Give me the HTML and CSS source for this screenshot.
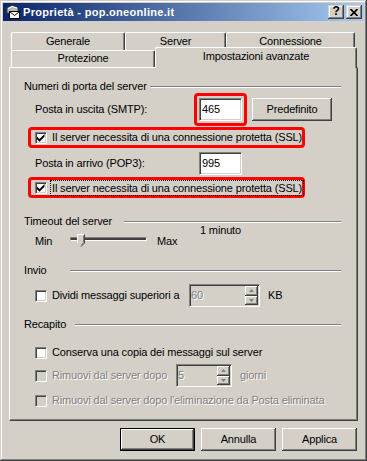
FILE: index.html
```html
<!DOCTYPE html>
<html>
  <head>
    <meta charset="utf-8">
    <title>Proprietà - pop.oneonline.it</title>
    <link rel="stylesheet" href="styles.css">
  </head>
  <body>

    <div class="window">
      <div class="titlebar">
        <svg class="appicon" width="16" height="16" viewBox="0 0 16 16">
          <path d="M2 4 L7 1.5 L13 3.5 L13 9 L2 9 Z" fill="#b8b8b8" stroke="#404040" stroke-width="1"/>
          <path d="M3 4.5 L7 2.5 L12 4" fill="none" stroke="#fff" stroke-width="1"/>
          <rect x="4.5" y="7.5" width="10" height="7" fill="#fff" stroke="#000" stroke-width="1"/>
          <path d="M4.5 7.5 L9.5 11.5 L14.5 7.5" fill="none" stroke="#000" stroke-width="1"/>
        </svg>
        <span class="title">Proprietà - pop.oneonline.it</span>
        <span class="capbtn help">?</span>
        <span class="capbtn close">
          <svg width="8" height="7" viewBox="0 0 8 7"><path d="M0.5 0 L7.5 7 M7.5 0 L0.5 7" stroke="#000" stroke-width="1.7"/></svg>
        </span>
      </div>

      <div class="client">
        <div class="tabrow">
          <div class="tab t-gen">Generale</div>
          <div class="tab t-srv">Server</div>
          <div class="tab t-con">Connessione</div>
        </div>
        <div class="tabrow front">
          <div class="tab t-pro">Protezione</div>
          <div class="tab t-adv sel">Impostazioni avanzate</div>
        </div>

        <div class="panel">
          <div class="grp g-ports"><span>Numeri di porta del server</span></div>
          <div class="row r-smtp">
            <span class="lbl l-smtp">Posta in uscita (SMTP):</span>
            <span class="mark"><span class="edit e-port">465</span></span>
            <span class="btn b-def">Predefinito</span>
          </div>
          <div class="chk hl r-ssl1">
            <span class="cb on"><svg width="10" height="10" viewBox="0 0 10 10"><path d="M1 3.5 L3.5 6 L8.5 1 L8.5 3.8 L3.5 8.8 L1 6.3 Z" fill="#000"/></svg></span>
            <span class="txt">Il server necessita di una connessione protetta (SSL)</span>
          </div>
          <div class="row r-pop">
            <span class="lbl l-pop">Posta in arrivo (POP3):</span>
            <span class="edit e-port">995</span>
          </div>
          <div class="chk hl r-ssl2">
            <span class="cb on"><svg width="10" height="10" viewBox="0 0 10 10"><path d="M1 3.5 L3.5 6 L8.5 1 L8.5 3.8 L3.5 8.8 L1 6.3 Z" fill="#000"/></svg></span>
            <span class="txt focus">Il server necessita di una connessione protetta (SSL)</span>
          </div>

          <div class="grp g-timeout"><span>Timeout del server</span></div>
          <div class="sliderrow">
            <span class="s-min">Min</span>
            <span class="slider">
              <span class="track"></span>
              <svg class="thumb" width="8" height="13" viewBox="0 0 8 13">
                <path d="M0.5 0.5 L7.5 0.5 L7.5 9 L4 12.5 L0.5 9 Z" fill="#d4d0c8"/>
                <path d="M0.5 9 L0.5 0.5 L7 0.5" fill="none" stroke="#fff" stroke-width="1"/>
                <path d="M7.5 0.5 L7.5 9 L4 12.5" fill="none" stroke="#404040" stroke-width="1"/>
                <path d="M6.5 1.5 L6.5 8.6 L4 11" fill="none" stroke="#808080" stroke-width="1"/>
              </svg>
            </span>
            <span class="s-max">Max</span>
            <span class="s-val">1 minuto</span>
          </div>

          <div class="grp g-invio"><span>Invio</span></div>
          <div class="row r-split">
            <span class="cb"></span>
            <span class="txt w-split">Dividi messaggi superiori a</span>
            <span class="edit dis e-split">
              <span class="val">60</span>
              <span class="spin">
                <span class="sb"><svg width="5" height="3" viewBox="0 0 5 3"><path d="M2.5 0 L5 3 L0 3 Z" fill="#808080"/></svg></span>
                <span class="sb"><svg width="5" height="3" viewBox="0 0 5 3"><path d="M0 0 L5 0 L2.5 3 Z" fill="#808080"/></svg></span>
              </span>
            </span>
            <span class="unit">KB</span>
          </div>

          <div class="grp g-recap"><span>Recapito</span></div>
          <div class="row r-keep">
            <span class="cb"></span>
            <span class="txt">Conserva una copia dei messaggi sul server</span>
          </div>
          <div class="row r-days">
            <span class="cb dis"></span>
            <span class="txt dis w-days">Rimuovi dal server dopo</span>
            <span class="edit dis e-days">
              <span class="val">5</span>
              <span class="spin">
                <span class="sb"><svg width="5" height="3" viewBox="0 0 5 3"><path d="M2.5 0 L5 3 L0 3 Z" fill="#808080"/></svg></span>
                <span class="sb"><svg width="5" height="3" viewBox="0 0 5 3"><path d="M0 0 L5 0 L2.5 3 Z" fill="#808080"/></svg></span>
              </span>
            </span>
            <span class="unit dis">giorni</span>
          </div>
          <div class="row r-del">
            <span class="cb dis"></span>
            <span class="txt dis">Rimuovi dal server dopo l'eliminazione da Posta eliminata</span>
          </div>
        </div>

        <div class="buttons">
          <span class="btn default">OK</span>
          <span class="btn">Annulla</span>
          <span class="btn">Applica</span>
        </div>
      </div>
    </div>

  </body>
</html>
```

FILE: styles.css
```css
body { margin: 0; font-family: "Liberation Sans", Arial, sans-serif; font-size: 11px; line-height: 13px; letter-spacing: -0.15px; color: #000; background: #d4d0c8; }

.window { width: 367px; height: 461px; box-sizing: border-box; padding: 3px; background: #d4d0c8;
  box-shadow: inset -1px -1px #404040, inset 1px 1px #d4d0c8, inset -2px -2px #808080, inset 2px 2px #fff; }

/* title bar */
.titlebar { height: 18px; display: flex; align-items: center; padding: 0 2px; color: #fff; background: linear-gradient(to right, #0a246a, #a6caf0); }
.appicon { margin-right: 2px; flex: none; }
.title { font-weight: bold; letter-spacing: 0.3px; }
.capbtn { width: 16px; height: 14px; box-sizing: border-box; display: flex; align-items: center; justify-content: center; background: #d4d0c8; color: #000; font-weight: bold; font-size: 12px;
  box-shadow: inset -1px -1px #404040, inset 1px 1px #d4d0c8, inset -2px -2px #808080, inset 2px 2px #fff; }
.help { margin-left: auto; margin-right: 2px; padding-bottom: 1px; }

.client { padding: 11px 6px 0; }

/* tabs */
.tabrow { display: flex; align-items: flex-start; height: 18px; padding-left: 2px; }
.tabrow.front { height: 17px; }
.tab { box-sizing: border-box; height: 18px; padding-top: 2px; text-align: center; background: #d4d0c8;
  border-top: 1px solid #fff; border-left: 1px solid #fff; border-right: 1px solid #404040;
  border-radius: 2px 2px 0 0; box-shadow: inset -1px 0 #808080; }
.front .tab { height: 17px; padding-top: 1px; }
.front .tab.sel { height: 21px; margin-top: -3px; padding-top: 2px; position: relative; z-index: 1; }
.t-gen { width: 114px; }
.t-srv { width: 101px; }
.t-con { width: 129px; }
.t-pro { width: 144px; }
.t-adv { width: 202px; }

/* page */
.panel { height: 354px; box-sizing: border-box; padding: 0 16px 0 14px;
  border-top: 1px solid #fff; border-left: 1px solid #fff; border-right: 1px solid #404040; border-bottom: 1px solid #404040;
  box-shadow: inset -1px -1px #808080; }

.grp { display: flex; align-items: center; height: 13px; }
.grp::after { content: ""; flex: 1; border-top: 1px solid #808080; border-bottom: 1px solid #fff; }
.g-ports { margin-top: 12px; }
.g-ports span { min-width: 126px; }
.g-timeout { margin-top: 17px; }
.g-timeout span { min-width: 100px; }
.g-invio { margin-top: 14px; }
.g-invio span { min-width: 46px; }
.g-recap { margin-top: 11px; }
.g-recap span { min-width: 51px; }

.row { display: flex; align-items: center; height: 23px; margin-left: 11px; }
.r-smtp { height: 33px; }
.r-pop { margin-top: 4px; }
.r-split { margin-top: 7px; }
.r-keep { margin-top: 10px; }
.r-del { margin-top: 2px; }
.lbl { flex: none; }
.l-smtp { width: 159px; }
.l-pop { width: 164px; }

.mark { display: flex; padding: 2px; border: 3px solid #f00; border-radius: 4px; }

.edit { box-sizing: border-box; display: flex; align-items: center; height: 23px; padding-left: 2px; background: #fff;
  border: 1px solid; border-color: #808080 #fff #fff #808080; box-shadow: inset 1px 1px #404040, inset -1px -1px #d4d0c8; }
.e-port { width: 43px; }
.e-split { width: 71px; }
.e-days { width: 56px; }
.edit.dis { background: #d4d0c8; color: #808080; padding-left: 1px; }
.spin { display: flex; flex-direction: column; align-self: stretch; width: 13px; margin: 1px 1px 1px auto; }
.sb { flex: 1; display: flex; align-items: center; justify-content: center; background: #d4d0c8;
  box-shadow: inset -1px -1px #404040, inset 1px 1px #fff, inset -2px -2px #808080; }

.btn { box-sizing: border-box; display: flex; align-items: center; justify-content: center; width: 75px; height: 23px; background: #d4d0c8;
  box-shadow: inset -1px -1px #404040, inset 1px 1px #fff, inset -2px -2px #808080; }
.b-def { width: 80px; margin-left: 5px; }
.btn.default { border: 1px solid #000; }

/* checkboxes */
.chk { display: flex; align-items: center; box-sizing: border-box; height: 21px; margin-left: 11px; }
.chk.hl { width: 277px; margin-left: 4px; padding-left: 4px; border: 3px solid #f00; border-radius: 4px; }
.r-ssl1 { margin-top: 1px; }
.r-ssl2 { margin-top: 2px; }
.cb { flex: none; box-sizing: border-box; width: 12px; height: 12px; display: flex; align-items: center; justify-content: center; background: #fff;
  border: 1px solid; border-color: #808080 #fff #fff #808080; box-shadow: inset 1px 1px #404040, inset -1px -1px #d4d0c8; }
.cb.dis { background: #d4d0c8; }
.txt { margin-left: 5px; white-space: nowrap; }
.txt.focus { margin-left: 4px; padding: 1px 1px 0; outline: 1px dotted #000; }
.w-split { width: 137px; flex: none; }
.w-days { width: 124px; flex: none; }
.unit { margin-left: 8px; }
.dis { color: #808080; text-shadow: 1px 1px #fff; }

/* slider */
.sliderrow { display: flex; align-items: flex-start; height: 22px; margin-left: 11px; }
.s-min { width: 35px; margin-top: 7px; }
.slider { position: relative; width: 77px; height: 13px; margin-top: 6px; }
.track { display: block; margin-top: 3px; height: 4px; box-sizing: border-box; background: #404040;
  border: 1px solid; border-color: #808080 #fff #fff #808080; }
.thumb { position: absolute; left: 7px; top: 0; }
.s-max { width: 43px; margin-left: 10px; margin-top: 7px; }
.s-val { margin-top: -4px; }

.buttons { display: flex; justify-content: flex-end; gap: 6px; margin-top: 7px; padding-right: 1px; }
```
